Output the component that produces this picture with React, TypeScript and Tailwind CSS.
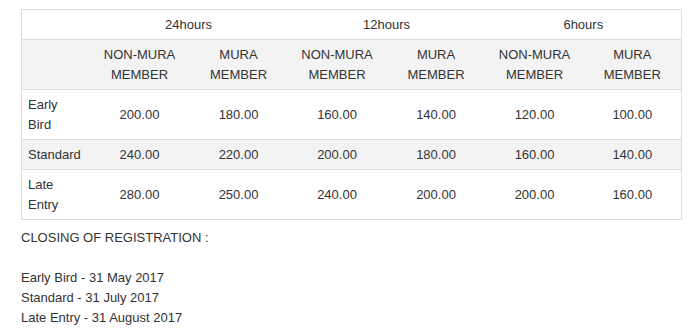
import React from "react";

const groups = ["24hours", "12hours", "6hours"];

const rows: { label: React.ReactNode; values: string[]; shaded?: boolean }[] = [
  { label: <>Early<br />Bird</>, values: ["200.00", "180.00", "160.00", "140.00", "120.00", "100.00"] },
  { label: "Standard", values: ["240.00", "220.00", "200.00", "180.00", "160.00", "140.00"], shaded: true },
  { label: <>Late<br />Entry</>, values: ["280.00", "250.00", "240.00", "200.00", "200.00", "160.00"] },
];

export default function App() {
  return (
    <div
      className="bg-white w-[696px] h-[329px] pl-[21px] pt-[9px] text-[13px] leading-[20px] text-[#333]"
      style={{ fontFamily: '"Liberation Sans", Arial, sans-serif' }}
    >
      <table className="table-fixed border-collapse w-[660px] border border-[#ddd]">
        <colgroup>
          <col className="w-[68px]" />
          <col className="w-[100px]" />
          <col className="w-[98px]" />
          <col className="w-[99px]" />
          <col className="w-[99px]" />
          <col className="w-[98px]" />
          <col className="w-[98px]" />
        </colgroup>
        <thead>
          <tr className="border-b border-[#ddd]">
            <th className="pt-[5px] pb-[4px] font-normal"></th>
            {groups.map((g) => (
              <th key={g} colSpan={2} className="pt-[5px] pb-[4px] px-[5px] font-normal text-center">
                {g}
              </th>
            ))}
          </tr>
          <tr className="bg-[#f3f3f3] border-b border-[#ddd]">
            <th className="pt-[5px] pb-[4px] font-normal"></th>
            {groups.map((g) => (
              <React.Fragment key={g}>
                <th className="pt-[5px] pb-[4px] px-[5px] font-normal text-center">
                  NON-MURA<br />MEMBER
                </th>
                <th className="pt-[5px] pb-[4px] px-[5px] font-normal text-center">
                  MURA<br />MEMBER
                </th>
              </React.Fragment>
            ))}
          </tr>
        </thead>
        <tbody>
          {rows.map((r, i) => (
            <tr key={i} className={`border-b border-[#ddd] ${r.shaded ? "bg-[#f3f3f3]" : ""}`}>
              <td className="pt-[5px] pb-[4px] px-[6px] text-left">{r.label}</td>
              {r.values.map((v, j) => (
                <td key={j} className="pt-[5px] pb-[4px] px-[5px] text-center">
                  {v}
                </td>
              ))}
            </tr>
          ))}
        </tbody>
      </table>
      <p className="mt-[8px]">
        CLOSING OF REGISTRATION :
        <br />
        <br />
        Early Bird - 31 May 2017
        <br />
        Standard - 31 July 2017
        <br />
        Late Entry - 31 August 2017
      </p>
    </div>
  );
}
